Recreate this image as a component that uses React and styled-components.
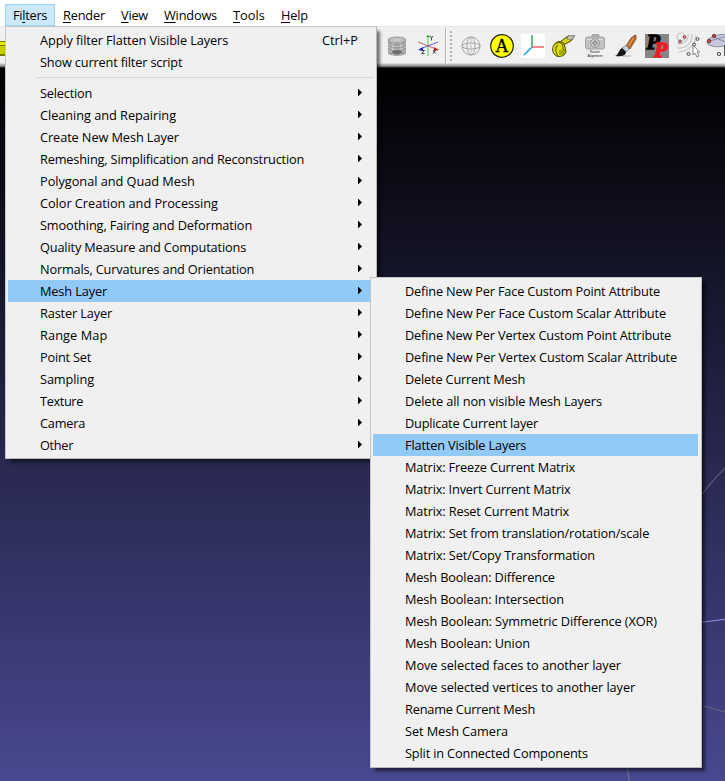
import React from "react";
import styled, { createGlobalStyle } from "styled-components";

const GlobalStyle = createGlobalStyle`
  * { box-sizing: border-box; }
  body { margin: 0; background: #000; overflow: hidden; }
`;

const Window = styled.div`
  position: relative;
  display: flex;
  flex-direction: column;
  width: 725px;
  height: 781px;
  overflow: hidden;
  color: #000;
  font: 12.75px/22px "Open Sans", "Noto Sans", sans-serif;
`;

const MenuBar = styled.nav`
  display: flex;
  flex: none;
  height: 26px;
  padding: 4px 0 0 5px;
  background: #fff;
`;

const MenuTitle = styled.span`
  width: ${(p) => p.$width}px;
  height: 22px;
  padding-left: 7px;
  line-height: 20px;
  letter-spacing: ${(p) => p.$tracking}px;
  white-space: nowrap;
  border: 1px solid ${(p) => (p.$open ? "#99d1ff" : "transparent")};
  background: ${(p) => (p.$open ? "#cce8ff" : "transparent")};
`;

const Mnemonic = styled.span`
  text-decoration: underline;
  text-decoration-thickness: 1px;
  text-underline-offset: 2px;
`;

const Toolbar = styled.div`
  display: flex;
  flex: none;
  align-items: center;
  gap: 7px;
  height: 42px;
  padding-bottom: 3px;
  border-top: 1px solid #e6e6e6;
  background: linear-gradient(#f0f0f0 36px, #c4c4c4 37px, #8e8e8e 39px, #555 40px, #000 41px);
`;

const ClippedTool = styled.div`
  flex: none;
  width: 5px;
  height: 15px;
  margin: 4px 373px 0 0;
  border: 1px solid #77750a;
  border-width: 1px 0 2px;
  background: linear-gradient(#e4e400 3px, #777500 3px, #777500 4px, #caca00 4px);
`;

const Tool = styled.svg`
  flex: none;
  width: 24px;
  height: 24px;
  overflow: visible;
`;

const ToolGroupEdge = styled.div`
  display: flex;
  flex: none;
  align-items: center;
  width: 7px;
  height: 36px;
  margin: 0 0 0 -2px;
  border-left: 1px solid #b4b4b4;
  box-shadow: inset 1px 0 #fafafa;
`;

const Grip = styled.div`
  width: 2px;
  height: 30px;
  margin-left: 4px;
  background: repeating-linear-gradient(#b0b0b0 0 2px, #f0f0f0 2px 4px);
`;

const Viewport = styled.main`
  flex: 1;
  background: linear-gradient(#000, #484890);
`;

const Trackball = styled.svg`
  display: block;
  width: 725px;
  height: 713px;
`;

const Menu = styled.div`
  position: absolute;
  display: flex;
  flex-direction: column;
  border: 1px solid #c6c6c6;
  border-right-color: #b8b8b8;
  border-bottom-color: #b8b8b8;
  background: #f0f0f0;
  box-shadow: 4px 4px 3px -1px rgba(0, 0, 0, 0.55);
`;

const FilterMenu = styled(Menu)`
  top: 26px;
  left: 5px;
  width: 372px;
  height: 433px;
  padding: 2px;
`;

const LayerMenu = styled(Menu)`
  top: 277px;
  left: 370px;
  width: 332px;
  height: 491px;
  padding: 2px 3px 2px 2px;
`;

const Row = styled.div`
  display: flex;
  flex: none;
  align-items: center;
  justify-content: space-between;
  height: 22px;
  padding: 0 12px 0 32px;
  background: ${(p) => (p.$active ? "#91c9f7" : "transparent")};
`;

const Label = styled.span`
  line-height: 22px;
  letter-spacing: ${(p) => p.$tracking}px;
  white-space: nowrap;
`;

const Shortcut = styled(Label)`
  margin-right: 4px;
`;

const Divider = styled.div`
  flex: none;
  height: 1px;
  margin: 4px 0 4px 28px;
  background: #d7d7d7;
`;

const Arrow = styled.svg`
  width: 4px;
  height: 7px;
  margin-bottom: 1px;
`;

const titles = [
  ["Fi", "l", "ters", 50, -0.27],
  ["", "R", "ender", 58, -0.17],
  ["", "V", "iew", 43, -0.21],
  ["", "W", "indows", 69, -0.18],
  ["", "T", "ools", 48, 0.06],
  ["", "H", "elp", 43, -0.14],
];

const categories = [
  ["Selection", -0.2],
  ["Cleaning and Repairing", -0.04],
  ["Create New Mesh Layer", -0.09],
  ["Remeshing, Simplification and Reconstruction", -0.17],
  ["Polygonal and Quad Mesh", -0.03],
  ["Color Creation and Processing", -0.04],
  ["Smoothing, Fairing and Deformation", -0.12],
  ["Quality Measure and Computations", -0.15],
  ["Normals, Curvatures and Orientation", -0.17],
  ["Mesh Layer", -0.13],
  ["Raster Layer", -0.14],
  ["Range Map", 0.1],
  ["Point Set", -0.2],
  ["Sampling", -0.11],
  ["Texture", -0.37],
  ["Camera", -0.22],
  ["Other", -0.32],
];

const layerFilters = [
  ["Define New Per Face Custom Point Attribute", -0.17],
  ["Define New Per Face Custom Scalar Attribute", -0.14],
  ["Define New Per Vertex Custom Point Attribute", -0.17],
  ["Define New Per Vertex Custom Scalar Attribute", -0.14],
  ["Delete Current Mesh", -0.18],
  ["Delete all non visible Mesh Layers", -0.09],
  ["Duplicate Current layer", -0.2],
  ["Flatten Visible Layers", -0.15],
  ["Matrix: Freeze Current Matrix", -0.16],
  ["Matrix: Invert Current Matrix", -0.16],
  ["Matrix: Reset Current Matrix", -0.15],
  ["Matrix: Set from translation/rotation/scale", -0.14],
  ["Matrix: Set/Copy Transformation", -0.13],
  ["Mesh Boolean: Difference", -0.13],
  ["Mesh Boolean: Intersection", -0.13],
  ["Mesh Boolean: Symmetric Difference (XOR)", -0.09],
  ["Mesh Boolean: Union", -0.12],
  ["Move selected faces to another layer", -0.05],
  ["Move selected vertices to another layer", -0.07],
  ["Rename Current Mesh", -0.2],
  ["Set Mesh Camera", -0.08],
  ["Split in Connected Components", -0.15],
];

const LayersTool = () => (
  <Tool viewBox="0 0 24 24">
    <path d="M3 6v12c3 4 15 4 18 0V6z" fill="#bababa" />
    <ellipse cx="12" cy="6" rx="9" ry="3" fill="#bdbdbd" stroke="#888" strokeWidth=".8" />
    <g fill="none" stroke="#7c7c7c" strokeWidth=".9">
      <path d="M3 8c3 4 15 4 18 0M3 11c3 4 15 4 18 0M3 14c3 4 15 4 18 0M3 17c3 4 15 4 18 0M3 19c3 3 15 3 18 0" />
      <path d="M8 4l8 4M16 4L8 8M8 9v12M16 9v12" stroke="#d2d2d2" />
    </g>
    <ellipse cx="12" cy="18" rx="5" ry="2" fill="#6d6d6d" />
  </Tool>
);

const AxesTool = () => (
  <Tool viewBox="0 0 24 24">
    <path d="M12 3v19" stroke="#9be0a0" strokeWidth="2" />
    <path d="M2 8l18 7" stroke="#d66060" />
    <path d="M22 8L4 15" stroke="#6262d2" />
    <path d="M10 3h4l-2-2z" fill="#159528" />
    <path d="M18 13l5 3-5 1z" fill="#c32020" />
    <path d="M7 13l-5 3 5 1z" fill="#2020bd" />
    <path d="M14 2l1.500 2 1.500-2M15.500 4v2.500M5.500 16.500h3l-3 3h3M17 16l2.500 3.500M19.500 16L17 19.500" fill="none" stroke="#333" strokeWidth=".9" />
  </Tool>
);

const GlobeTool = () => (
  <Tool viewBox="0 0 24 24" fill="none" stroke="#a5a5a5">
    <circle cx="12" cy="12" r="9" />
    <ellipse cx="12" cy="12" rx="4" ry="9" />
    <ellipse cx="12" cy="12" rx="9" ry="3" />
    <path d="M12 3v18" stroke="#bcbcbc" />
  </Tool>
);

const LetterTool = () => (
  <Tool viewBox="0 0 24 24">
    <circle cx="12" cy="12" r="11.3" fill="#ff0" stroke="#222" strokeWidth="1.2" />
    <text x="12" y="18.2" textAnchor="middle" fontFamily="Liberation Serif, serif" fontSize="18.500" stroke="#000" strokeWidth=".3">A</text>
  </Tool>
);

const OriginTool = () => (
  <Tool viewBox="0 0 24 24" fill="none" strokeWidth="1.6">
    <path fill="#fff" d="M0 0h24v24H0z" />
    <path d="M11 1v12" stroke="#3fae60" />
    <path d="M11 13h12" stroke="#f26969" />
    <path d="M11 13L3 21" stroke="#1ca7e8" />
  </Tool>
);

const TapeTool = () => (
  <Tool viewBox="0 0 24 24">
    <path d="M8 8L16 2l6 .500-3 4.500-8 4z" fill="#d6d611" stroke="#444400" />
    <path d="M16 2l7-.500-4 4.500-4-1z" fill="#c9c9bb" stroke="#65655d" strokeWidth=".7" />
    <path d="M2 11c2-4 8-5 10-1l1 3 1 5-2 3c-3 2-7 2-9 0-3-3-3-7-1-10z" fill="#dede05" stroke="#4c4a00" />
    <path d="M3 10c5-3 8-1 8 3v3M6 11c-3 2-3 7 0 11" fill="none" stroke="#656300" strokeWidth="1.1" />
    <path d="M8 16v5M10 16v5M12 15v5" stroke="#777500" />
  </Tool>
);

const CameraTool = () => (
  <Tool viewBox="0 0 24 24">
    <rect x="2.500" y="3" width="19" height="12" rx="2" fill="#c2c2c2" stroke="#a0a0a0" />
    <path d="M8 3l1-3h7l1 3z" fill="#aaa" />
    <path d="M4 5.500h16" stroke="#ddd" />
    <circle cx="12" cy="9" r="4.300" fill="#dedede" stroke="#8b8b8b" />
    <circle cx="12" cy="9" r="2.300" fill="#aaa" stroke="#8b8b8b" />
    <g fontFamily="Liberation Sans, sans-serif" fontSize="3.400" textAnchor="middle" fill="#222">
      <text x="12" y="19.400">Raster</text>
      <text x="12" y="23.400">Alignment</text>
    </g>
  </Tool>
);

const BrushTool = () => (
  <Tool viewBox="0 0 24 24">
    <path d="M8 22h9" stroke="#ccc" strokeWidth="2" />
    <path d="M12 12L17 4l4-3h1v4l-6 10z" fill="#bd6827" stroke="#744018" strokeWidth=".7" />
    <path d="M14.500 12l5-8" stroke="#efad6c" />
    <path d="M8 14l4-3 3 4-3 3z" fill="#c5d0d3" stroke="#6c797d" strokeWidth=".7" />
    <path d="M8 14l4 4c0 4-6 5-11 4 4-1 3-6 7-8z" fill="#161616" />
  </Tool>
);

const PaintTool = () => (
  <Tool viewBox="0 0 24 24">
    <path fill="#858585" d="M0 0h24v24H0z" />
    <g fontFamily="Liberation Serif, serif" fontSize="22" fontWeight="bold" fontStyle="italic" strokeWidth="1.300">
      <text x="1.500" y="15" stroke="#000">P</text>
      <text x="9" y="23" fill="#ec1c24" stroke="#ec1c24">P</text>
    </g>
  </Tool>
);

const PointPickTool = () => (
  <Tool viewBox="0 0 24 24">
    <g fill="none" stroke="#c5c5c5" strokeWidth="1.2">
      <circle cx="5" cy="3" r="4" />
      <path d="M12 0c1 6-4 11-11 10M16 0c1 8-6 15-15 14M20 1c0 9-8 17-18 17" />
    </g>
    <g fill="#e17272" stroke="#72494d" strokeWidth=".8">
      <circle cx="4" cy="7.500" r="1.500" /><circle cx="8.500" cy="3" r="1.500" />
    </g>
    <g fill="#ddd" stroke="#555">
      <circle cx="21.500" cy="5" r="1.500" /><circle cx="18" cy="10.500" r="1.500" /><circle cx="12.500" cy="20" r="1.500" />
    </g>
    <path d="M17 11v10l2-2 2 4 2-1-2-4h2.500z" fill="#fff" stroke="#777" strokeWidth=".9" />
  </Tool>
);

const PlanePickTool = () => (
  <Tool viewBox="0 0 24 24">
    <ellipse cx="14" cy="6.500" rx="14" ry="6" transform="rotate(-8 14 6)" fill="#c6c8dc" stroke="#9092aa" />
    <path d="M3 7l17-5M7 3l16 7" fill="none" stroke="#8b8b9f" />
    <circle cx="2" cy="7" r="1.700" fill="#e33d46" stroke="#6b343b" />
    <circle cx="7" cy="2" r="1.700" fill="#e33d46" stroke="#6b343b" />
    <circle cx="12" cy="20" r="1.700" fill="#ddd" stroke="#555" />
    <path d="M17.500 11v11l3-3" fill="#fff" stroke="#555" />
  </Tool>
);

export default function App() {
  return (
    <Window>
      <GlobalStyle />
      <MenuBar>
        {titles.map(([before, key, after, width, tracking], i) => (
          <MenuTitle key={after} $width={width} $tracking={tracking} $open={i === 0}>
            {before}<Mnemonic>{key}</Mnemonic>{after}
          </MenuTitle>
        ))}
      </MenuBar>
      <Toolbar>
        <ClippedTool />
        <LayersTool />
        <AxesTool />
        <ToolGroupEdge><Grip /></ToolGroupEdge>
        <GlobeTool />
        <LetterTool />
        <OriginTool />
        <TapeTool />
        <CameraTool />
        <BrushTool />
        <PaintTool />
        <PointPickTool />
        <PlanePickTool />
      </Toolbar>
      <Viewport>
        <Trackball viewBox="0 68 725 713" fill="none" strokeWidth="1.2">
          <path d="M700 497Q710 483 727 466" stroke="#606078" />
          <path d="M700 622.500L727 619" stroke="#9191df" />
          <path d="M700 705L727 712.500" stroke="#63637d" />
          <path d="M627 764Q627.500 774 630 784" stroke="#75758a" />
        </Trackball>
      </Viewport>
      <FilterMenu>
        <Row>
          <Label $tracking={-0.11}>Apply filter Flatten Visible Layers</Label>
          <Shortcut $tracking={0}>Ctrl+P</Shortcut>
        </Row>
        <Row><Label $tracking={-0.17}>Show current filter script</Label></Row>
        <Divider />
        {categories.map(([name, tracking]) => (
          <Row key={name} $active={name === "Mesh Layer"}>
            <Label $tracking={tracking}>{name}</Label>
            <Arrow viewBox="0 0 4 7"><path d="M0 0h.5L4 3.500 .5 7H0z" /></Arrow>
          </Row>
        ))}
      </FilterMenu>
      <LayerMenu>
        {layerFilters.map(([name, tracking]) => (
          <Row key={name} $active={name === "Flatten Visible Layers"}>
            <Label $tracking={tracking}>{name}</Label>
          </Row>
        ))}
      </LayerMenu>
    </Window>
  );
}
